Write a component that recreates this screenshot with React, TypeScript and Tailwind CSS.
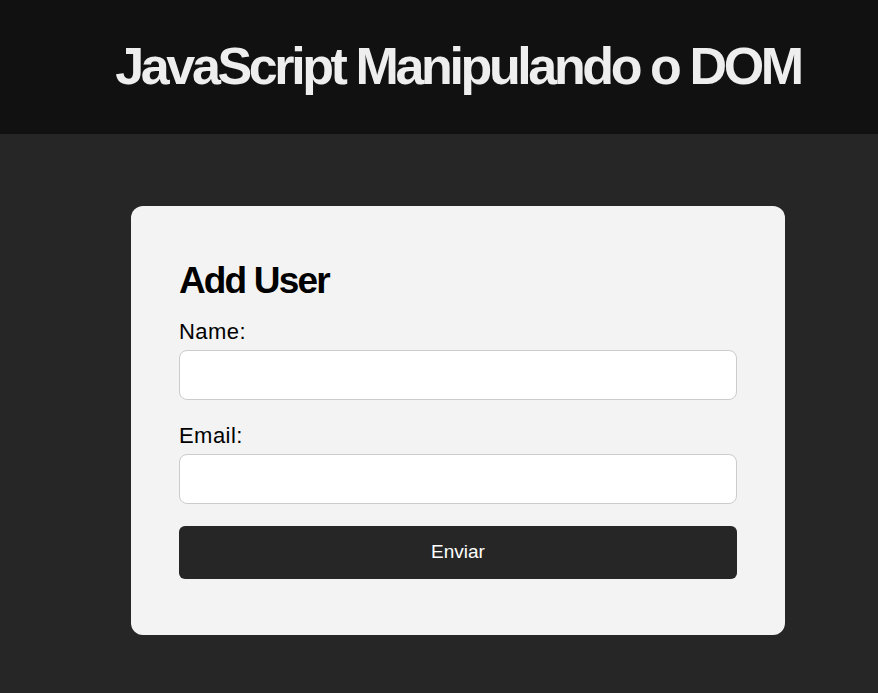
import React from 'react';

const font = { fontFamily: '"Liberation Sans", Arial, sans-serif' };

const Field = ({ label, id, first }: { label: string; id: string; first?: boolean }) => (
  <div className={first ? 'mt-[17px]' : 'mt-[24px]'}>
    <label htmlFor={id} className="block text-[22px] leading-[24px] tracking-[0.02em] text-black">
      {label}
    </label>
    <input
      id={id}
      type="text"
      className="mt-[6px] block h-[50px] w-full rounded-[8px] border border-[#cccccc] bg-white px-3 outline-none"
    />
  </div>
);

export default function App() {
  return (
    <div className="min-h-[693px] bg-[#262626]" style={font}>
      {/* topo */}
      <header className="flex h-[134px] items-center justify-center bg-[#111111] pb-[2px] pl-[38px]">
        <h1 className="text-[52px] font-bold leading-[60px] tracking-[-0.065em] text-[#eeeeee]">
          JavaScript Manipulando o DOM
        </h1>
      </header>

      <main className="flex justify-center pl-[38px] pt-[72px]">
        <form
          className="w-[654px] rounded-[12px] bg-[#f3f3f3] px-[48px] pt-[48px] pb-[56px]"
          onSubmit={(e) => e.preventDefault()}
        >
          <h2 className="mt-[5px] text-[37px] font-bold leading-[44px] tracking-[-0.05em] text-black">
            Add User
          </h2>
          <Field label="Name:" id="name" first />
          <Field label="Email:" id="email" />
          <button
            type="submit"
            className="mt-[22px] block h-[53px] w-full rounded-[6px] bg-[#262626] text-[19px] text-white"
          >
            Enviar
          </button>
        </form>
      </main>
    </div>
  );
}
